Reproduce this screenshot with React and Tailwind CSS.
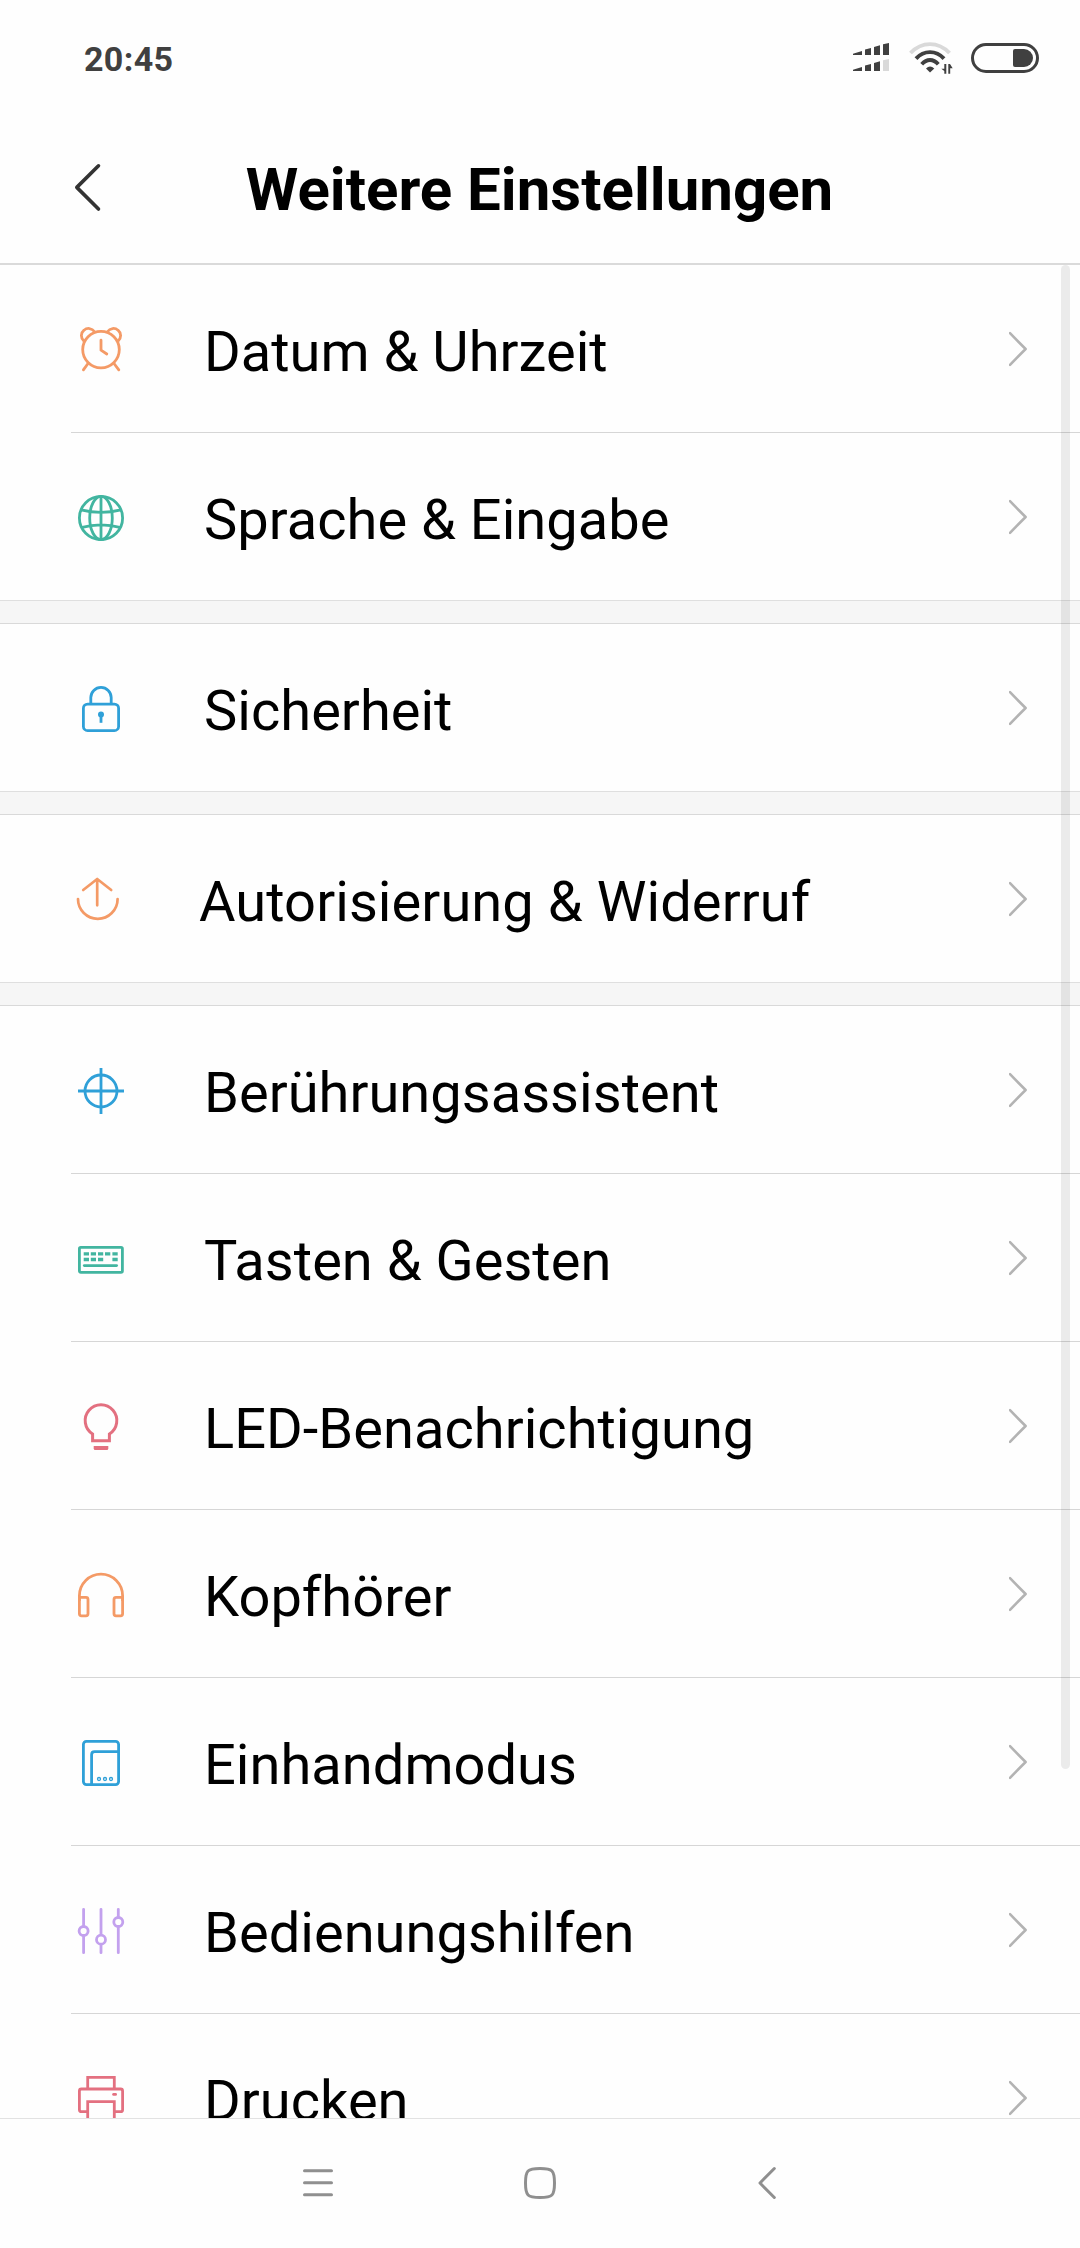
import React from "react";

const ORANGE = "#f49a66";
const GREEN = "#42b5a0";
const BLUE = "#2fa0d8";
const PINK = "#e37080";
const PURPLE = "#c3a1ee";

function Icon({ color, width = 2.8, children }) {
  return (
    <svg
      viewBox="0 0 48 48"
      className="mt-[61px] h-12 w-12 shrink-0 overflow-visible"
      fill="none"
      stroke={color}
      strokeWidth={width}
    >
      {children}
    </svg>
  );
}

const icons = {
  clock: (
    <Icon color={ORANGE}>
      <circle cx="24" cy="23.6" r="18.3" />
      <path d="M7 15.2C3.4 12 3.6 7 7 4.2C10 1.6 14.8 1.8 17.6 5.8M41 15.2C44.6 12 44.4 7 41 4.2C38 1.6 33.2 1.8 30.4 5.8" />
      <path d="M11 37.5L6.4 43.8M37 37.5L41.8 43.8M24 14.2V24.2L29.8 28" strokeLinecap="round" strokeLinejoin="round" />
    </Icon>
  ),
  globe: (
    <Icon color={GREEN} width={2.8}>
      <circle cx="24" cy="24" r="21.6" />
      <ellipse cx="24" cy="24" rx="11.3" ry="21.6" />
      <path d="M24 2V46M4 15.8Q24 20.8 44 15.8M4 33.6Q24 28.2 44 33.6" />
    </Icon>
  ),
  lock: (
    <Icon color={BLUE}>
      <rect x="6.4" y="19.1" width="35.2" height="26.5" rx="4.2" />
      <path d="M13.8 19V12.6A10.2 10.2 0 0 1 34.2 12.6V19" />
      <circle cx="24" cy="29.4" r="3" fill={BLUE} stroke="none" />
      <path d="M24 30V37.8" />
    </Icon>
  ),
  share: (
    <Icon color={ORANGE} width={2.7}>
      <path d="M5 23A19.8 19.8 0 0 0 44.6 23M24.2 29.3V3M10.2 14L24.2 3L38.2 14" strokeLinecap="round" strokeLinejoin="round" />
    </Icon>
  ),
  target: (
    <Icon color={BLUE} width={2.8}>
      <circle cx="24" cy="24" r="16" />
      <path d="M24 1V47M1 24H47" />
    </Icon>
  ),
  keyboard: (
    <Icon color={GREEN}>
      <rect x="2.4" y="12.4" width="43" height="25" rx="1.4" />
      <path d="M6.7 18.8H12M13.8 18.8H19M21 18.8H26.2M28 18.8H33.3M35.4 18.8H40.7M6.7 24.5H12M13.8 24.5H19M21 24.5H26.2M35.4 24.5H40.7" strokeWidth="3.3" />
      <path d="M7.3 30.6H39.6" strokeLinecap="round" />
    </Icon>
  ),
  bulb: (
    <Icon color={PINK} width={3}>
      <path d="M15.6 37.7V31A15.8 15.8 0 1 1 32.4 31V37.7Z" />
      <path d="M16.7 43H31.3V45.5Q31.3 47 29.8 47H18.2Q16.7 47 16.7 45.5Z" fill={PINK} stroke="none" />
    </Icon>
  ),
  headphones: (
    <Icon color={ORANGE} width={2.8}>
      <path d="M2.4 30V24.7A21.6 21.6 0 0 1 45.6 24.7V30" />
      <path d="M2.4 26.4H9Q11 26.4 11 28.4V42.8Q11 44.8 9 44.8H4.4Q2.4 44.8 2.4 42.8ZM45.6 26.4H39Q37 26.4 37 28.4V42.8Q37 44.8 39 44.8H43.6Q45.6 44.8 45.6 42.8Z" />
    </Icon>
  ),
  onehand: (
    <Icon color={BLUE}>
      <rect x="6.4" y="2.4" width="35.2" height="43.2" rx="3" />
      <path d="M14.6 45.5V15.7Q14.6 12.7 17.6 12.7H41.5" />
      <g strokeWidth="1.3">
        <circle cx="22" cy="40" r="1.5" />
        <circle cx="28" cy="40" r="1.5" />
        <circle cx="34" cy="40" r="1.5" />
      </g>
    </Icon>
  ),
  sliders: (
    <Icon color={PURPLE}>
      <circle cx="6.6" cy="24" r="4.5" />
      <circle cx="24" cy="32.7" r="4.5" />
      <circle cx="41.3" cy="15" r="4.5" />
      <path d="M6.6 2.3V19M6.6 29V45.7M24 2.3V27.7M24 37.7V45.7M41.3 2.3V10M41.3 20V45.7" strokeLinecap="round" />
    </Icon>
  ),
  printer: (
    <Icon color={PINK}>
      <path d="M10.7 13V2.4H37.3V13M10.7 50V26.7H37.3V50" />
      <path d="M10 36.7H4.4Q2.4 36.7 2.4 34.7V16Q2.4 14 4.4 14H43.6Q45.6 14 45.6 16V34.7Q45.6 36.7 43.6 36.7H38" />
      <path d="M36.6 19.4H38.6" strokeLinecap="round" />
    </Icon>
  ),
};

const groups = [
  [
    { icon: "clock", label: "Datum & Uhrzeit" },
    { icon: "globe", label: "Sprache & Eingabe" },
  ],
  [{ icon: "lock", label: "Sicherheit" }],
  [{ icon: "share", label: "Autorisierung & Widerruf", outdent: true }],
  [
    { icon: "target", label: "Berührungsassistent" },
    { icon: "keyboard", label: "Tasten & Gesten" },
    { icon: "bulb", label: "LED-Benachrichtigung" },
    { icon: "headphones", label: "Kopfhörer" },
    { icon: "onehand", label: "Einhandmodus" },
    { icon: "sliders", label: "Bedienungshilfen" },
    { icon: "printer", label: "Drucken" },
  ],
];

function Row({ item, last }) {
  return (
    <li className="h-[168px] shrink-0">
      <div className={item.outdent ? "flex h-[167px] pr-[51px] pl-[73px]" : "flex h-[167px] pr-[51px] pl-[77px]"}>
        {icons[item.icon]}
        <span
          className={
            item.outdent
              ? "mt-[54px] ml-[78px] flex-1 text-[56px] leading-[66px] tracking-[0.08px] whitespace-nowrap text-black"
              : "mt-[54px] ml-[79px] flex-1 text-[56px] leading-[66px] tracking-[0.03px] whitespace-nowrap text-black"
          }
        >
          {item.label}
        </span>
        <svg viewBox="0 0 20 36" className="mt-[66px] h-9 w-5 shrink-0" fill="none" stroke="#b3b3b3" strokeWidth="2.6" strokeLinecap="round" strokeLinejoin="round">
          <path d="M1 2.2L16.6 18L1 33.8" />
        </svg>
      </div>
      <div className={last ? "h-px bg-[#dfdfdf]" : "ml-[71px] h-px bg-[#d6d6d6]"} />
    </li>
  );
}

function StatusBar() {
  return (
    <div className="flex h-[88px] items-start pr-[41px] pl-[84px]">
      <span className="mt-[39px] flex-1 text-[34px] leading-[40px] font-bold tracking-[0.35px] text-[#404040]">20:45</span>
      <svg viewBox="0 0 36 28" className="mt-[43px] mr-5 h-7 w-9" fill="#404040">
        <path d="M0 10.7L9 8V12H0ZM12 6.5L18 5V12H12ZM21 4L27 2.3V12H21ZM30 1.2L36 0V12H30Z" />
        <path d="M0 26.7L9 24V28H0ZM12 22.5L18 21V28H12ZM21 20L27 18.3V28H21Z" />
        <path d="M30 17.2L36 16V28H30Z" fill="#d9d9d9" />
      </svg>
      <svg viewBox="0 0 44 33" className="mt-[41px] mr-[18px] h-[33px] w-11" fill="none" stroke="#404040" strokeWidth="3.9">
        <path d="M1.5 12Q10 3.1 21 3.1T40.5 12" stroke="#d9d9d9" />
        <path d="M7 17.6Q13 11.1 21 11.1T35 17.6" />
        <path d="M12.7 23.2Q16.500 19 21 19T29.3 23.2" />
        <path d="M17 27.5Q21 23.3 25.3 27.5L21 31.500Z" fill="#404040" stroke="none" />
        <path d="M37.300 23V32.700H35.300V30L32.300 27.700H35.300V23ZM39.300 23H41L43.700 27.300H41.200V32.700H39.300Z" fill="#404040" stroke="none" />
      </svg>
      <div className="mt-[43px] flex h-[30px] w-[68px] items-center justify-end rounded-full border-[3px] border-[#404040] pr-[3px]">
        <div className="h-[18px] w-5 rounded-l-[2px] rounded-r-[9px] bg-[#404040]" />
      </div>
    </div>
  );
}

function Header() {
  return (
    <header className="flex h-[177px] items-start border-b-2 border-[#dadada] pr-[73px] pl-[73px]">
      <svg viewBox="0 0 30 50" className="mt-[75px] h-[50px] w-[30px]" fill="none" stroke="#333333" strokeWidth="3.6" strokeLinecap="round" strokeLinejoin="round">
        <path d="M25.5 2.8L3.8 24.4L25.5 46" />
      </svg>
      <h1 className="mt-[67px] mr-[31px] flex-1 text-center text-[60px] leading-[70px] font-bold text-black">
        Weitere Einstellungen
      </h1>
    </header>
  );
}

function NavBar() {
  return (
    <nav className="flex h-[130px] shrink-0 items-center justify-center gap-[165px] border-t border-[#e2e2e2] bg-[#fefefe]">
      <svg viewBox="0 0 60 41" className="h-[41px] w-[60px]" fill="none" stroke="#8f8f8f" strokeWidth="3" strokeLinecap="round">
        <path d="M19.5 7.8H46.5M19.5 19.8H46.5M19.5 31.8H46.5" />
      </svg>
      <svg viewBox="0 0 60 41" className="h-[41px] w-[60px]" fill="none" stroke="#8f8f8f" strokeWidth="3">
        <path d="M30 5.5C42.5 5.5 44.5 7.2 44.5 20S42.5 34.5 30 34.5S15.5 32.5 15.5 20S17.5 5.5 30 5.5Z" />
      </svg>
      <svg viewBox="0 0 60 41" className="h-[41px] w-[60px]" fill="none" stroke="#8f8f8f" strokeWidth="3" strokeLinecap="round" strokeLinejoin="round">
        <path d="M39.3 5.5L25 20L39.3 34.5" />
      </svg>
    </nav>
  );
}

export default function App() {
  return (
    <div className="flex h-[2248px] w-[1080px] flex-col overflow-hidden bg-[#fefefe] font-[Roboto,sans-serif]">
      <StatusBar />
      <Header />
      <main className="relative min-h-0 flex-1 overflow-hidden">
        {groups.map((group, g) => (
          <section key={g}>
            <ul>
              {group.map((item, i) => (
                <Row key={item.label} item={item} last={i === group.length - 1} />
              ))}
            </ul>
            {g < groups.length - 1 && <div className="h-[23px] border-b border-[#d9d9d9] bg-[#f6f6f6]" />}
          </section>
        ))}
        <div className="absolute top-0 right-[10px] h-[1504px] w-[9px] rounded-full bg-black/[0.075]" />
      </main>
      <NavBar />
    </div>
  );
}
